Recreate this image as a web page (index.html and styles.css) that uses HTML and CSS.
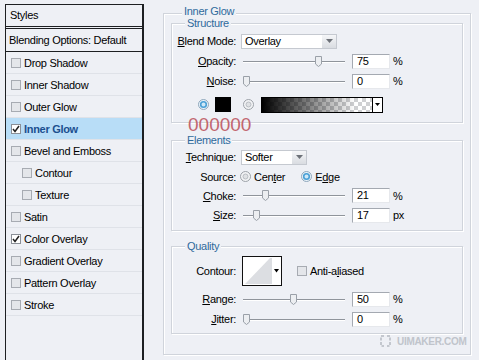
FILE: index.html
```html
<!DOCTYPE html>
<html lang="en">
<head>
  <meta charset="UTF-8" />
  <title>Layer Style - Inner Glow</title>
  <link rel="stylesheet" href="styles.css">
</head>
<body>

  <!-- styles list -->
  <div class="styles-panel">
    <div class="panel-head">Styles</div>
    <div class="blend-head">Blending Options: Default</div>
    <ul class="effects">
      <li class="effect"><span class="check"></span>Drop Shadow</li>
      <li class="effect"><span class="check"></span>Inner Shadow</li>
      <li class="effect"><span class="check"></span>Outer Glow</li>
      <li class="effect selected"><span class="check on"><svg width="8" height="8" viewBox="0 0 8 8"><path d="M1 4l2 2.5L7 1" fill="none" stroke="#222" stroke-width="1.5"/></svg></span>Inner Glow</li>
      <li class="effect"><span class="check"></span>Bevel and Emboss</li>
      <li class="effect sub"><span class="check"></span>Contour</li>
      <li class="effect sub"><span class="check"></span>Texture</li>
      <li class="effect"><span class="check"></span>Satin</li>
      <li class="effect"><span class="check on"><svg width="8" height="8" viewBox="0 0 8 8"><path d="M1 4l2 2.5L7 1" fill="none" stroke="#222" stroke-width="1.5"/></svg></span>Color Overlay</li>
      <li class="effect"><span class="check"></span>Gradient Overlay</li>
      <li class="effect"><span class="check"></span>Pattern Overlay</li>
      <li class="effect"><span class="check"></span>Stroke</li>
    </ul>
  </div>

  <!-- inner glow settings -->
  <div class="group outer">
    <div class="group-title">Inner Glow</div>

    <div class="group structure">
      <div class="group-title">Structure</div>
      <div class="rows">
        <div class="row">
          <span class="label"><u>B</u>lend Mode:</span>
          <div class="select wide"><span class="select-text">Overlay</span><span class="select-btn"><svg width="7" height="4"><path d="M0 0h7L3.5 4z" fill="#6d7178"/></svg></span></div>
        </div>
        <div class="row">
          <span class="label"><u>O</u>pacity:</span>
          <div class="slider"><span class="thumb" style="left: 72px"><svg width="7" height="11"><path d="M0.5 0.5H6.5V8L3.5 10.5L0.5 8Z" fill="#eceef1" stroke="#9aa0a8"/></svg></span></div>
          <span class="num">75</span><span class="unit">%</span>
        </div>
        <div class="row">
          <span class="label"><u>N</u>oise:</span>
          <div class="slider"><span class="thumb" style="left: 0px"><svg width="7" height="11"><path d="M0.5 0.5H6.5V8L3.5 10.5L0.5 8Z" fill="#eceef1" stroke="#9aa0a8"/></svg></span></div>
          <span class="num">0</span><span class="unit">%</span>
        </div>
        <div class="color-row">
          <svg class="radio" width="11" height="11"><circle cx="5.5" cy="5.5" r="5" fill="#e9f3fa" stroke="#8fa7bb"/><circle cx="5.5" cy="5.5" r="2.8" fill="#cfe8f7" stroke="#4aa0d6" stroke-width="1.6"/></svg>
          <span class="swatch"></span>
          <svg class="radio gap" width="11" height="11"><circle cx="5.5" cy="5.5" r="5" fill="#f3f4f6" stroke="#9ca1a8"/><circle cx="5.5" cy="5.5" r="2.5" fill="#dfe1e4" stroke="#b8bcc2"/></svg>
          <div class="gradient"><span class="gradient-fill"></span><span class="gradient-btn"><svg width="5" height="3"><path d="M0 0h5L2.5 3z" fill="#000"/></svg></span></div>
        </div>
      </div>
      <span class="hex">000000</span>
    </div>

    <div class="group elements">
      <div class="group-title">Elements</div>
      <div class="rows">
        <div class="row">
          <span class="label"><u>T</u>echnique:</span>
          <div class="select narrow"><span class="select-text">Softer</span><span class="select-btn"><svg width="7" height="4"><path d="M0 0h7L3.5 4z" fill="#6d7178"/></svg></span></div>
        </div>
        <div class="row tight">
          <span class="label">Source:</span>
          <svg class="radio src" width="11" height="11"><circle cx="5.5" cy="5.5" r="5" fill="#f3f4f6" stroke="#9ca1a8"/><circle cx="5.5" cy="5.5" r="2.5" fill="#dfe1e4" stroke="#b8bcc2"/></svg>
          <span class="opt">Cen<u>t</u>er</span>
          <svg class="radio src-gap" width="11" height="11"><circle cx="5.5" cy="5.5" r="5" fill="#e9f3fa" stroke="#8fa7bb"/><circle cx="5.5" cy="5.5" r="2.8" fill="#cfe8f7" stroke="#4aa0d6" stroke-width="1.6"/></svg>
          <span class="opt">E<u>d</u>ge</span>
        </div>
        <div class="row tight">
          <span class="label"><u>C</u>hoke:</span>
          <div class="slider"><span class="thumb" style="left: 19px"><svg width="7" height="11"><path d="M0.5 0.5H6.5V8L3.5 10.5L0.5 8Z" fill="#eceef1" stroke="#9aa0a8"/></svg></span></div>
          <span class="num">21</span><span class="unit">%</span>
        </div>
        <div class="row">
          <span class="label"><u>S</u>ize:</span>
          <div class="slider"><span class="thumb" style="left: 10px"><svg width="7" height="11"><path d="M0.5 0.5H6.5V8L3.5 10.5L0.5 8Z" fill="#eceef1" stroke="#9aa0a8"/></svg></span></div>
          <span class="num">17</span><span class="unit">px</span>
        </div>
      </div>
    </div>

    <div class="group quality">
      <div class="group-title">Quality</div>
      <div class="rows">
        <div class="row contour-row">
          <span class="label">Contour:</span>
          <svg class="contour" width="40" height="30"><rect x="0.5" y="0.5" width="39" height="29" fill="#fff" stroke="#111"/><path d="M3 28L28 2H30V28Z" fill="#dcdee2"/><path d="M32 13h5l-2.5 3.5z" fill="#000"/></svg>
          <span class="check aa"></span>
          <span class="opt">Anti-a<u>l</u>iased</span>
        </div>
        <div class="row">
          <span class="label"><u>R</u>ange:</span>
          <div class="slider"><span class="thumb" style="left: 47px"><svg width="7" height="11"><path d="M0.5 0.5H6.5V8L3.5 10.5L0.5 8Z" fill="#eceef1" stroke="#9aa0a8"/></svg></span></div>
          <span class="num">50</span><span class="unit">%</span>
        </div>
        <div class="row">
          <span class="label"><u>J</u>itter:</span>
          <div class="slider"><span class="thumb" style="left: 0px"><svg width="7" height="11"><path d="M0.5 0.5H6.5V8L3.5 10.5L0.5 8Z" fill="#eceef1" stroke="#9aa0a8"/></svg></span></div>
          <span class="num">0</span><span class="unit">%</span>
        </div>
      </div>
    </div>
  </div>

  <div class="watermark">
    <svg width="11" height="12"><path d="M4 1H1V11H4M7 1H10V11H7" fill="none" stroke="#c3c7ce" stroke-width="2" stroke-dasharray="3 1.5"/></svg>
    <span>UIMAKER.COM</span>
  </div>

</body>
</html>
```

FILE: styles.css
```css
* {
  box-sizing: border-box;
}

html,
body {
  margin: 0;
  width: 479px;
  height: 360px;
  overflow: hidden;
}

body {
  position: relative;
  display: flex;
  align-items: flex-start;
  padding: 4px 0 0 5px;
  background: #eef0f5;
  color: #000;
  font-family: "Liberation Sans", Arial, sans-serif;
  font-size: 11px;
  letter-spacing: -0.3px;
}

u {
  text-decoration-thickness: 1px;
  text-underline-offset: 1px;
}

/* left list */
.styles-panel {
  flex-shrink: 0;
  width: 139px;
  height: 356px;
  border: 1px solid #1d1f22;
  border-right-width: 2px;
  border-bottom: none;
  background: #eef0f5;
}

.panel-head {
  height: 24px;
  line-height: 21px;
  padding-left: 4px;
  border-bottom: 3px double #1d1f22;
}

.blend-head {
  height: 23px;
  line-height: 22px;
  padding-left: 3px;
  border-bottom: 1px solid #1d1f22;
}

.effects {
  list-style: none;
  margin: 0;
  padding: 0;
}

.effect {
  display: flex;
  align-items: center;
  height: 22px;
  padding-left: 5px;
  border-bottom: 1px solid #dfe2e8;
}

.effect.sub {
  padding-left: 16px;
}

.effect.selected {
  background: #b8ddf7;
  color: #1b4f8f;
  font-weight: bold;
}

.check {
  display: flex;
  align-items: center;
  justify-content: center;
  flex-shrink: 0;
  width: 10px;
  height: 10px;
  margin-right: 3px;
  border: 1px solid #a7abb2;
  background: #e4e6ea;
}

.check.on {
  border-color: #8a8f97;
  background: #fff;
}

/* group boxes */
.group {
  border: 1px solid #d0d4db;
  box-shadow: inset 1px 1px 0 #fff, 1px 1px 0 #fff;
}

.group-title {
  width: fit-content;
  margin: -8px 0 0 13px;
  padding: 0 2px;
  line-height: 14px;
  background: #eef0f5;
  color: #2e6a9c;
}

.outer {
  flex-shrink: 0;
  width: 308px;
  height: 342px;
  margin: 9px 0 0 19px;
  padding: 0 7px;
}

.outer > .group-title {
  margin: -10px 0 0 11px;
}

.structure {
  position: relative;
  margin-top: 5px;
}

.structure .rows {
  padding: 1px 0 4px;
}

.elements {
  margin-top: 17px;
}

.elements .rows {
  padding-bottom: 5px;
}

.quality {
  margin-top: 15px;
}

.quality .rows {
  padding-bottom: 4px;
}

/* rows */
.row {
  display: flex;
  align-items: center;
  height: 20px;
}

.row.tight {
  height: 19px;
}

.label {
  flex-shrink: 0;
  width: 64px;
  text-align: right;
}

.select {
  display: flex;
  height: 15px;
  margin-left: 5px;
  border: 1px solid #c5c9d0;
  background: #fff;
}

.select.wide {
  width: 96px;
}

.select.narrow {
  width: 66px;
}

.select-text {
  flex: 1;
  padding-left: 3px;
  line-height: 13px;
}

.select-btn {
  display: flex;
  align-items: center;
  justify-content: center;
  width: 14px;
  background: linear-gradient(#f5f6f8, #d9dce1);
}

.slider {
  position: relative;
  flex-shrink: 0;
  width: 102px;
  height: 11px;
  margin-left: 7px;
  background: linear-gradient(#8f949b, #8f949b) 0 5px / 100% 1px no-repeat,
    linear-gradient(#fff, #fff) 0 6px / 100% 1px no-repeat;
}

.thumb {
  position: absolute;
  top: 0;
  display: flex;
}

.num {
  width: 38px;
  height: 15px;
  margin-left: 7px;
  padding-left: 4px;
  line-height: 13px;
  border: 1px solid;
  border-color: #a4a9b1 #e6e8ec #e6e8ec #a4a9b1;
  background: #fff;
}

.unit {
  margin-left: 3px;
}

/* color row */
.color-row {
  display: flex;
  align-items: center;
  height: 27px;
  padding-left: 26px;
}

.radio {
  flex-shrink: 0;
}

.radio.gap {
  margin-left: 12px;
}

.swatch {
  width: 16px;
  height: 15px;
  margin-left: 6px;
  background: #000;
}

.gradient {
  display: flex;
  width: 122px;
  height: 16px;
  margin-left: 7px;
  border: 1px solid #000;
}

.gradient-fill {
  flex: 1;
  background: linear-gradient(to right, #000 0%, rgba(0, 0, 0, 0) 85%),
    repeating-conic-gradient(#cfd0d2 0 25%, #fff 0 50%) 0 0 / 8px 8px;
}

.gradient-btn {
  display: flex;
  align-items: center;
  justify-content: center;
  width: 10px;
  border-left: 1px solid #000;
  background: #fff;
}

.hex {
  position: absolute;
  left: 16px;
  top: 91px;
  font-size: 19px;
  line-height: 19px;
  letter-spacing: 0;
  color: #c2666f;
}

/* source + contour */
.radio.src {
  margin-left: 4px;
}

.radio.src-gap {
  margin-left: 16px;
}

.opt {
  margin-left: 3px;
}

.contour-row {
  height: 36px;
}

.contour {
  flex-shrink: 0;
  margin-left: 6px;
}

.check.aa {
  margin: 0 0 0 15px;
}

.watermark {
  position: absolute;
  left: 380px;
  top: 335px;
  display: flex;
  align-items: center;
  gap: 6px;
  color: #c0c4cb;
  font-size: 10px;
  font-weight: bold;
}
```
